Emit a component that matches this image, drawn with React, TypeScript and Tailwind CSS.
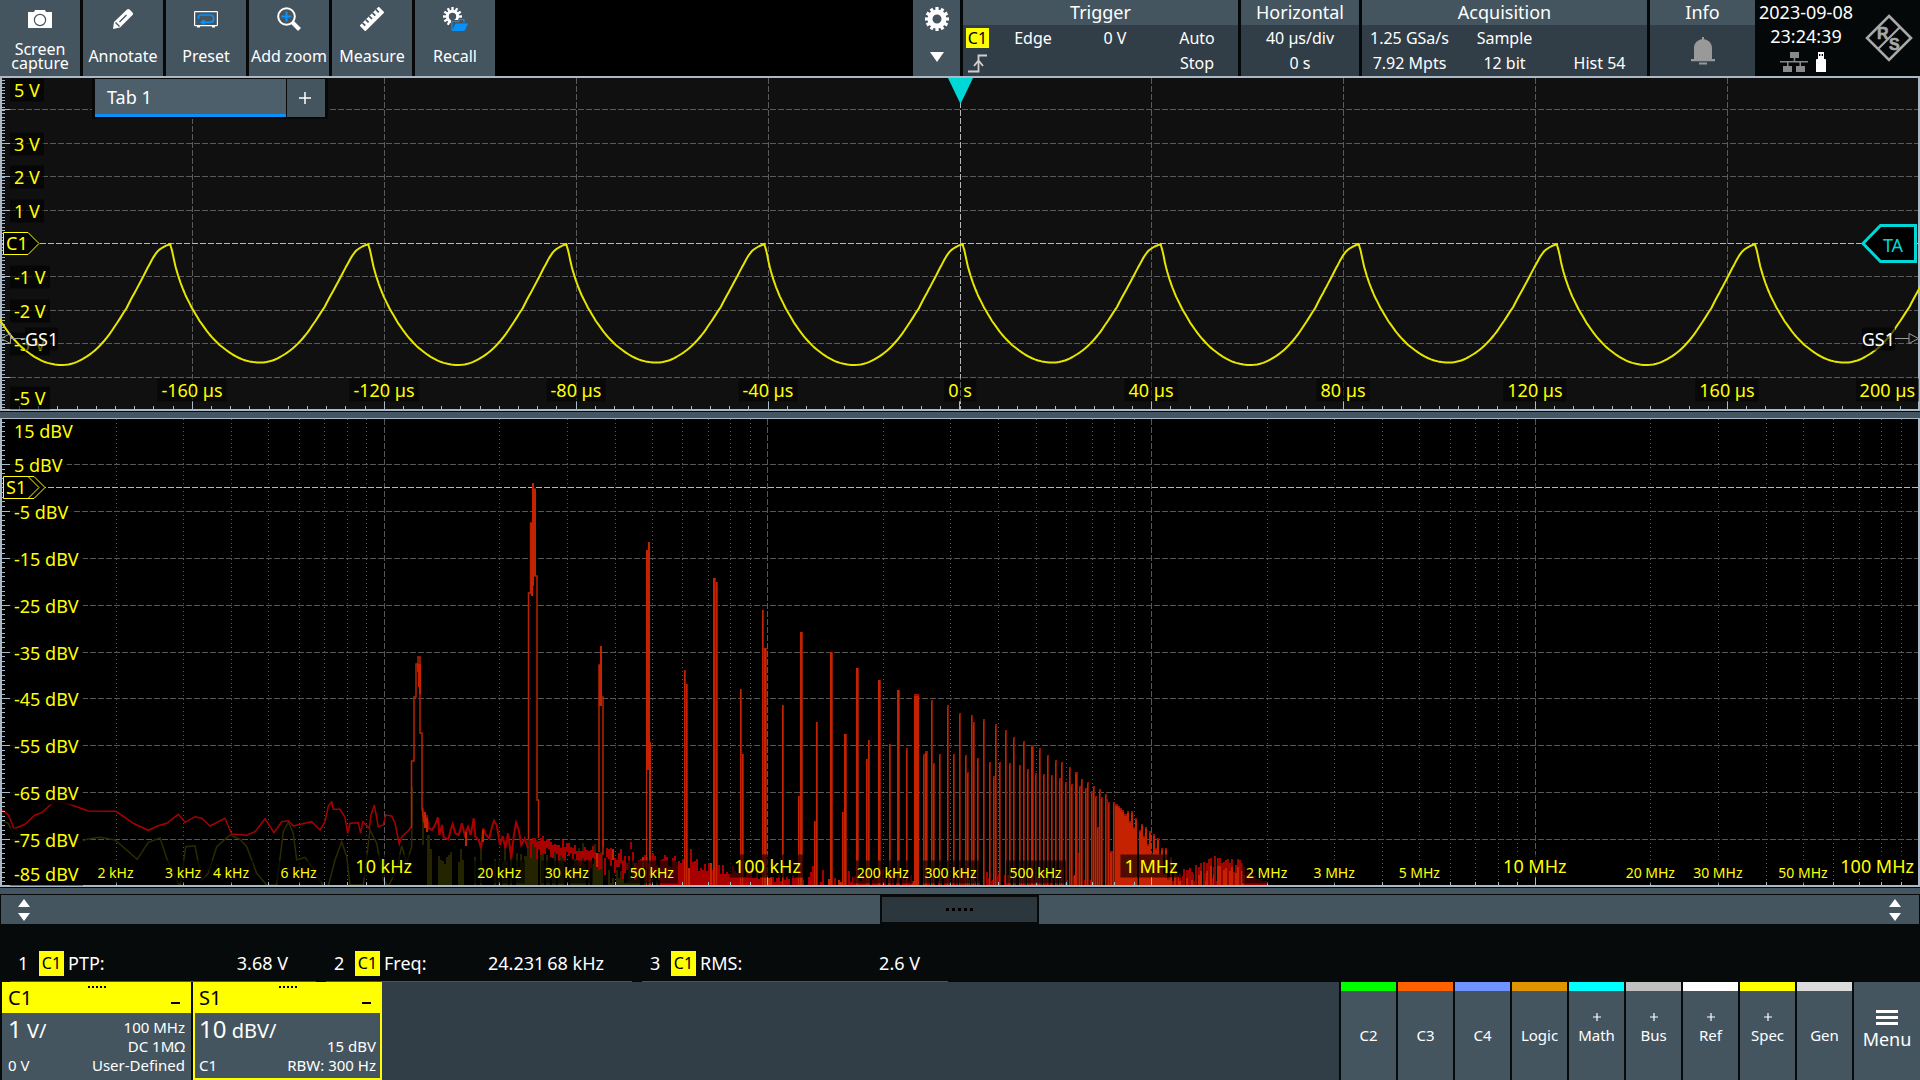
import React from "react";

/* ---------- shared helpers ---------- */

const VIEW_W = 1920;
const T_TOP = 76;
const T_H = 335;
const S_TOP = 418;
const S_H = 469;

const FRAME = "#a9b9c7";

function makeRandom(seed: number) {
  let s = seed;
  return () => {
    s = (s * 1664525 + 1013904223) % 4294967296;
    return s / 4294967296;
  };
}

function pct(value: number, start: number, size: number) {
  return `${((value - start) / size) * 100}%`;
}

/* ---------- time domain trace ---------- */

const CYCLE: [number, number][] = [
  [0, 244.5],
  [1, 246],
  [6, 267],
  [11, 283],
  [16, 295.5],
  [22, 307.5],
  [30, 321],
  [40, 334.5],
  [50, 345],
  [63, 354.5],
  [76, 360.5],
  [91, 362.5],
  [103, 360.5],
  [113, 355.5],
  [123, 348.5],
  [133, 338.5],
  [143, 325],
  [155, 307],
  [163, 292],
  [170, 279],
  [178, 264],
  [185, 252.5],
  [191, 247.5],
  [198.1, 244.5],
];

const PERIOD = 198.1;

/* Catmull-Rom sampling between neighbouring points of one cycle */
function smooth(list: [number, number][]) {
  const out: [number, number][] = [];
  for (let i = 0; i < list.length - 1; i++) {
    const p0 = list[Math.max(0, i - 1)];
    const p1 = list[i];
    const p2 = list[i + 1];
    const p3 = list[Math.min(list.length - 1, i + 2)];
    for (let s = 0; s < 4; s++) {
      const t = s / 4;
      const y =
        0.5 *
        (2 * p1[1] +
          (p2[1] - p0[1]) * t +
          (2 * p0[1] - 5 * p1[1] + 4 * p2[1] - p3[1]) * t * t +
          (3 * p1[1] - p0[1] - 3 * p2[1] + p3[1]) * t * t * t);
      out.push([p1[0] + (p2[0] - p1[0]) * t, y]);
    }
  }
  return out;
}

function buildWave() {
  const cycle = smooth(CYCLE);
  const pts: string[] = [];
  for (let k = -5; k <= 4; k++) {
    const start = 962.5 + PERIOD * k - 0.5;
    const depth = Math.abs(k) % 2 === 1 ? 1.021 : 1;
    cycle.forEach(([dx, y]) => {
      pts.push(`${(start + dx).toFixed(1)},${(244.5 + (y - 244.5) * depth).toFixed(1)}`);
    });
  }
  return pts.join(" ");
}

const WAVE = buildWave();

const V_LINES = [109, 143, 176, 210, 276, 310, 343, 377];

/* ---------- spectrum traces ---------- */

const RED_FLOOR: [number, number][] = [
  [0, 88], [10, 92], [25, 105], [35, 128], [42, 146], [75, 133], [105, 105], [125, 98], [165, 62], [205, 71],
  [265, 93], [348, 94], [400, 130], [445, 151], [475, 137], [500, 130], [535, 103], [555, 127], [585, 110],
  [605, 115], [630, 138], [675, 115], [695, 162], [740, 166], [765, 155], [795, 116], [822, 158], [845, 125],
  [865, 122], [880, 138], [935, 125], [960, 150], [975, 125], [985, 78], [995, 66], [1000, 88], [1020, 88],
  [1035, 112], [1043, 160], [1050, 130], [1075, 128], [1082, 160], [1088, 125], [1108, 145], [1113, 105],
  [1123, 75], [1135, 140], [1150, 135], [1157, 105], [1175, 108], [1185, 130], [1198, 192], [1205, 170],
  [1225, 152], [1234, 140],
];

const RED_MIDDLE: [number, number][] = [
  [1268, 85], [1272, 130], [1280, 105], [1286, 145], [1296, 150], [1305, 135], [1314, 112], [1318, 165],
  [1326, 135], [1331, 172], [1345, 178], [1352, 150], [1358, 132], [1366, 160], [1376, 165], [1386, 130],
  [1394, 165], [1404, 140], [1412, 165], [1421, 115], [1426, 170], [1436, 180], [1443, 205], [1450, 145],
  [1458, 165], [1468, 175], [1476, 140], [1482, 122], [1490, 135], [1500, 195], [1508, 168], [1516, 205],
  [1524, 160], [1534, 235], [1541, 170], [1548, 128], [1556, 150], [1564, 195], [1574, 175], [1584, 205],
];

const OLIVE_FLOOR: [number, number][] = [
  [0, 120], [25, 130], [40, 160], [100, 166], [160, 162], [200, 188], [240, 186], [260, 178], [300, 172],
  [345, 180], [412, 238], [445, 187], [480, 174], [500, 235], [520, 280], [540, 318], [557, 200], [585, 197],
  [605, 300], [625, 280], [650, 200], [690, 165], [720, 178], [740, 200], [770, 280], [800, 315], [830, 315],
  [850, 155], [865, 127], [880, 160], [890, 240], [915, 232], [935, 260], [970, 318], [985, 318], [1005, 240],
  [1025, 185], [1040, 230], [1050, 315], [1090, 315], [1110, 150], [1130, 190], [1150, 300], [1165, 318],
  [1190, 270], [1205, 197], [1220, 250], [1235, 200], [1237, 20],
];

const toPoints = (list: [number, number][]) =>
  list.map(([x, y]) => `${(x / 3).toFixed(1)},${(780 + y / 3).toFixed(1)}`).join(" ");

/* left edge, width, top */
const HARMONICS: [number, number, number][] = [
  [684, 2, 670], [686, 2, 684],
  [713, 3, 578], [716, 2, 582],
  [740, 2, 689], [742, 2, 754],
  [762, 2, 610], [764, 3, 648],
  [782, 2, 705],
  [798, 2, 796], [800, 3, 632],
  [814, 2, 821], [816, 2, 722],
  [830, 3, 652],
  [842, 2, 812], [844, 3, 734],
  [856, 3, 668],
  [866, 2, 759], [868, 2, 740],
  [878, 3, 680],
  [889, 2, 744],
  [897, 3, 690],
];

/* the upper harmonics, in thirds of a pixel from x = 900, y = 700 */
const DENSE: [number, number, number][] = [
  [19, 24, 145], [42, 57, -18], [68, 76, 163], [76, 83, 153], [93, 98, 0], [98, 105, 190], [117, 124, 163],
  [141, 147, 15], [159, 165, 162], [177, 183, 40], [195, 201, 165], [201, 207, 217], [213, 219, 46],
  [219, 225, 67], [231, 237, 175], [249, 255, 58], [267, 272, 185], [278, 285, 228], [285, 291, 72],
  [297, 303, 187], [315, 321, 91], [327, 333, 190], [339, 345, 112], [357, 363, 196], [369, 375, 124],
  [381, 388, 208], [393, 401, 136], [405, 411, 220], [417, 423, 145], [429, 435, 222], [441, 447, 166],
  [453, 459, 226], [465, 471, 181], [477, 483, 235], [483, 489, 187], [495, 501, 247], [507, 513, 202],
  [513, 519, 253], [525, 533, 217], [533, 537, 460], [537, 543, 257], [543, 549, 238], [555, 561, 265],
  [561, 567, 247], [573, 579, 272], [579, 585, 259], [585, 590, 287], [590, 598, 380], [598, 603, 268],
  [603, 609, 292], [615, 620, 283], [620, 625, 297], [625, 631, 307], [631, 639, 452], [639, 646, 305],
  [646, 655, 312], [655, 660, 318], [660, 666, 325], [666, 672, 331], [672, 680, 341], [680, 687, 334],
  [687, 693, 362], [693, 699, 333], [699, 704, 380], [704, 710, 355], [717, 722, 390], [722, 728, 371],
  [728, 734, 408], [734, 740, 382], [740, 747, 432], [747, 754, 394], [754, 759, 460], [759, 764, 402],
  [764, 771, 445], [771, 777, 415], [777, 783, 462], [783, 789, 445], [789, 795, 520], [795, 801, 445],
  [801, 809, 535], [809, 817, 470],
];

const HUMP: [number, number][] = [
  [822, 505], [829, 560], [836, 520], [843, 540], [850, 508], [857, 510], [863, 560], [868, 505], [874, 515],
  [881, 560], [886, 496], [893, 500], [901, 488], [908, 486], [914, 520], [919, 490], [925, 478], [931, 473],
  [938, 500], [943, 468], [950, 474], [957, 475], [963, 490], [969, 485], [976, 480], [982, 478], [988, 488],
  [994, 476], [1000, 515], [1006, 495], [1012, 478], [1018, 480], [1024, 490], [1030, 500], [1037, 515],
];

type Bar = { x: number; w: number; y: number; h: number; fill: string };

function buildFloor() {
  const rnd = makeRandom(77);
  const olive: Bar[] = [];
  const red: Bar[] = [];
  for (let x = 430; x < 700; x += 2) {
    const density = x < 500 ? 0.5 : x < 640 ? 0.8 : 0.4;
    if (rnd() < density) {
      const y = (x < 600 ? 842 : 858) + rnd() * 26;
      olive.push({ x, w: 2, y, h: 886 - y, fill: "#242400" });
    }
  }
  for (let x = 530; x < 1240; x += 2) {
    let base = 0;
    let spread = 0;
    if (x < 600) {
      base = 838 + (x - 530) * 0.2;
      spread = 9;
    } else if (x < 700) {
      base = 853 + (x - 600) * 0.12;
      spread = 14;
    } else if (x < 760) {
      base = 866 + (x - 700) * 0.15;
      spread = 10;
    } else {
      base = 878;
      spread = 8;
    }
    let y = base + (rnd() - 0.5) * spread;
    if (rnd() < 0.08) y -= 9;
    const reach = x < 660 ? 6 + rnd() * 12 : 60;
    const bottom = Math.min(886, y + reach);
    if (x > 780 && rnd() < 0.35) continue;
    red.push({ x, w: 2, y, h: Math.max(1, bottom - y), fill: rnd() < 0.14 ? "#c42400" : "#a80000" });
  }
  return { olive, red };
}

const FLOOR = buildFloor();

const KHZ = (f: number) => 384.2 + Math.log10(f / 10) * 383.7;

const MINOR_FREQS = [1, 10, 100, 1000, 10000].flatMap((d) => [2, 3, 4, 5, 6, 7, 8, 9].map((m) => m * d));
const MAJOR_FREQS = [10, 100, 1000, 10000];

const S_LINES = [464, 511, 558, 605, 652, 698, 745, 792, 839];

const FREQ_LABELS: { f: number; text: string; major?: boolean }[] = [
  { f: 2, text: "2 kHz" },
  { f: 3, text: "3 kHz" },
  { f: 4, text: "4 kHz" },
  { f: 6, text: "6 kHz" },
  { f: 10, text: "10 kHz", major: true },
  { f: 20, text: "20 kHz" },
  { f: 30, text: "30 kHz" },
  { f: 50, text: "50 kHz" },
  { f: 100, text: "100 kHz", major: true },
  { f: 200, text: "200 kHz" },
  { f: 300, text: "300 kHz" },
  { f: 500, text: "500 kHz" },
  { f: 1000, text: "1 MHz", major: true },
  { f: 2000, text: "2 MHz" },
  { f: 3000, text: "3 MHz" },
  { f: 5000, text: "5 MHz" },
  { f: 10000, text: "10 MHz", major: true },
  { f: 20000, text: "20 MHz" },
  { f: 30000, text: "30 MHz" },
  { f: 50000, text: "50 MHz" },
];

/* ---------- icons ---------- */

function Gear({ teeth = 12, r = 12, hole = 4, className = "" }: { teeth?: number; r?: number; hole?: number; className?: string }) {
  return (
    <svg viewBox="-12 -12 24 24" className={className} fill="none">
      <circle r={(r + hole) / 2 - 1} stroke="#fff" strokeWidth={r - hole - 3} />
      {Array.from({ length: teeth }, (_, i) => (
        <rect key={i} x={-1.6} y={-r} width={3.2} height={5} fill="#fff" transform={`rotate(${(360 / teeth) * i})`} />
      ))}
    </svg>
  );
}

const CameraIcon = () => (
  <svg viewBox="0 0 24 18" className="h-[18px] w-6">
    <path d="M0 2h6l1-2h10l1 2h6v16H0z" fill="#fff" />
    <circle cx="12" cy="10" r="5.6" fill="none" stroke="#445560" strokeWidth="1.2" />
  </svg>
);

const PencilIcon = () => (
  <svg viewBox="0 0 22 22" className="size-[22px]">
    <path d="M1 21l1-7L15 1.500c.8-.8 1.800-.8 2.600 0l2.900 2.900c.8.8.8 1.800 0 2.600L8 19.500z" fill="#fff" />
    <path d="M3.500 14.500l4 4M7.500 14l7-7" stroke="#445560" strokeWidth="1.300" fill="none" />
  </svg>
);

const PresetIcon = () => (
  <svg viewBox="0 0 24 18" className="h-[18px] w-6" fill="none">
    <rect x="0.6" y="1.600" width="22.800" height="14" rx="0.500" stroke="#fff" strokeWidth="1.200" />
    <path d="M3 16h3v1.500H3zM18 16h3v1.500h-3z" fill="#fff" />
    <path d="M4.500 9V7.500C4.500 6 5.500 5 7 5h9c2.200 0 3.700 1.500 3.700 3.700S18.200 12.300 16 12.300H9" stroke="#0a91f7" strokeWidth="1.700" />
    <path d="M6 12.300l4.500-3v6z" fill="#0a91f7" />
  </svg>
);

const AddZoomIcon = () => (
  <svg viewBox="0 0 24 24" className="size-6" fill="none">
    <circle cx="9.500" cy="9.500" r="8.300" stroke="#fff" strokeWidth="2" />
    <path d="M15.500 15.500l7 7" stroke="#fff" strokeWidth="4" />
    <path d="M9.500 4.500v10M4.500 9.500h10" stroke="#0a91f7" strokeWidth="2.200" />
  </svg>
);

const RulerIcon = () => (
  <svg viewBox="0 0 24 24" className="size-6">
    <g transform="rotate(-45 12 12)">
      <rect x="-1.500" y="8" width="27" height="8" fill="#fff" />
      <path d="M2.500 8v4M7.200 8v4M12 8v4M16.700 8v4M21.500 8v4" stroke="#445560" strokeWidth="1.700" />
    </g>
  </svg>
);

const RecallIcon = () => (
  <svg viewBox="0 0 26 26" className="size-[26px]" fill="none">
    <g transform="translate(10.500 10.500)">
      <circle r="5.200" stroke="#fff" strokeWidth="3" />
      {Array.from({ length: 12 }, (_, i) => (
        <rect key={i} x={-1.200} y={-9.500} width={2.400} height={4} fill="#fff" transform={`rotate(${30 * i})`} />
      ))}
    </g>
    <path d="M9 14h7l1-2h6v4h3l-3 9H9z" fill="#445560" />
    <path d="M10 24.500V15.500h6.500l1-2h4.500v3" stroke="#0a91f7" strokeWidth="1.200" />
    <path d="M10 25l3.500-7.500H26L22.500 25z" fill="#0a91f7" />
  </svg>
);

const BellIcon = () => (
  <svg viewBox="0 0 24 28" className="h-7 w-6" fill="#999">
    <path d="M11 0h2v2.200c4.500.5 8 4 8 8.800v11h3v2.200H0V22h3V11c0-4.800 3.500-8.300 8-8.800zM8 25.500h8v2H8z" />
  </svg>
);

const RisingEdgeIcon = () => (
  <svg viewBox="0 0 20 19" className="h-[19px] w-5" fill="none" stroke="#cfcfcf" strokeWidth="1.800">
    <path d="M0 17.500h10.500V1.500H19M6 12l4.500-5.500L15 12" />
  </svg>
);

const NetworkIcon = () => (
  <svg viewBox="0 0 28 20" className="h-5 w-7" fill="#8a8a8a">
    <path d="M10 0h9v6h-9zM3 14h9v6H3zM16 14h9v6h-9zM0 9h28v1.500H0zM13.700 6h1.500v3.500h-1.500zM7 10h1.500v4H7zM19.500 10H21v4h-1.500z" />
  </svg>
);

const UsbIcon = () => (
  <svg viewBox="0 0 10 20" className="h-5 w-2.5">
    <path d="M2 0h6v7h1.500l.5 1v12H0V8l.5-1H2z" fill="#fff" />
    <path d="M3 2h1.300v2H3zM5.700 2H7v2H5.700z" fill="#000" />
  </svg>
);

const Logo = () => (
  <svg viewBox="-24 -24 48 48" className="size-12" role="img" aria-label="R&S">
    <path d="M0-22L22 0 0 22-22 0z" fill="none" stroke="#a9a9a9" strokeWidth="2.600" />
    <path d="M-11 11L11-11" stroke="#a9a9a9" strokeWidth="2.200" />
    <text x="-12" y="1" fontSize="16" fontWeight="bold" fill="#a9a9a9" stroke="#a9a9a9" strokeWidth="0.600" className="font-['Liberation_Sans']">
      R
    </text>
    <text x="0" y="12" fontSize="16" fontWeight="bold" fill="#a9a9a9" stroke="#a9a9a9" strokeWidth="0.600" className="font-['Liberation_Sans']">
      S
    </text>
  </svg>
);

const UpDown = () => (
  <svg viewBox="0 0 12 22" className="h-[22px] w-3" fill="#fff">
    <path d="M6 0l6 8H0zM6 22l6-8H0z" />
  </svg>
);

/* ---------- header ---------- */

const TOOLS = [
  { label: "Screen capture", Icon: CameraIcon },
  { label: "Annotate", Icon: PencilIcon },
  { label: "Preset", Icon: PresetIcon },
  { label: "Add zoom", Icon: AddZoomIcon },
  { label: "Measure", Icon: RulerIcon },
  { label: "Recall", Icon: RecallIcon },
];

function InfoPanel({ title, className, children }: { title: string; className: string; children: React.ReactNode }) {
  return (
    <section className={`flex flex-col bg-[#323e47] ${className}`}>
      <h2 className="flex h-[25px] items-center justify-center bg-[#445560] text-lg leading-[25px]">{title}</h2>
      {children}
    </section>
  );
}

function Header() {
  return (
    <header className="flex h-[76px] justify-between bg-black">
      <nav className="flex gap-[3px] bg-[#080808]">
        {TOOLS.map(({ label, Icon }) => (
          <button key={label} type="button" className="flex w-20 flex-col items-center bg-[#445560]">
            <span className="flex h-[38px] items-center justify-center">
              <Icon />
            </span>
            <span
              className={`flex h-9 items-center justify-center text-base ${
                label === "Screen capture" ? "px-2 leading-[14px]" : "whitespace-nowrap"
              }`}
            >
              {label}
            </span>
          </button>
        ))}
      </nav>
      <div className="flex gap-[3px] bg-[#050808]">
        <button type="button" aria-label="Settings" className="flex w-[47px] flex-col items-center gap-[21px] bg-[#445560] pt-[7px]">
          <Gear className="size-6" />
          <svg viewBox="0 0 14 10" className="h-2.5 w-3.5" fill="#fff">
            <path d="M0 0h14L7 10z" />
          </svg>
        </button>
        <InfoPanel title="Trigger" className="w-[275px]">
          <div className="grid flex-1 grid-cols-[29px_1fr_1fr_1fr] grid-rows-2 place-items-center text-base leading-5">
            <span className="bg-[#ffff00] px-0.5 leading-5 text-black">C1</span>
            <span>Edge</span>
            <span>0 V</span>
            <span>Auto</span>
            <RisingEdgeIcon />
            <span />
            <span />
            <span>Stop</span>
          </div>
        </InfoPanel>
        <InfoPanel title="Horizontal" className="w-[118px]">
          <div className="grid flex-1 grid-rows-2 place-items-center text-base leading-5">
            <span>40 µs/div</span>
            <span>0 s</span>
          </div>
        </InfoPanel>
        <InfoPanel title="Acquisition" className="w-[285px]">
          <div className="grid flex-1 grid-cols-3 grid-rows-2 place-items-center text-base leading-5">
            <span>1.25 GSa/s</span>
            <span>Sample</span>
            <span />
            <span>7.92 Mpts</span>
            <span>12 bit</span>
            <span>Hist 54</span>
          </div>
        </InfoPanel>
        <div className="flex">
          <InfoPanel title="Info" className="w-[105px]">
            <div className="flex flex-1 items-center justify-center">
              <BellIcon />
            </div>
          </InfoPanel>
          <div className="flex w-[165px] items-center">
            <div className="flex h-full w-[102px] flex-col items-center text-lg leading-6">
              <span>2023-09-08</span>
              <span>23:24:39</span>
              <span className="flex gap-2 self-start pt-1 pl-[25px]">
                <NetworkIcon />
                <UsbIcon />
              </span>
            </div>
            <div className="flex flex-1 justify-center">
              <Logo />
            </div>
          </div>
        </div>
      </div>
    </header>
  );
}

/* ---------- plots ---------- */

const LABEL = "absolute -translate-y-1/2 whitespace-nowrap px-1 leading-[23px] text-[#ffff00]";

function TimePlot() {
  const yLabels: [string, number][] = [
    ["5 V", 90], ["3 V", 144], ["2 V", 177], ["1 V", 211], ["-1 V", 277], ["-2 V", 311], ["-3 V", 344], ["-5 V", 398],
  ];
  const xLabels: [string, number][] = [
    ["-160 µs", 192], ["-120 µs", 384], ["-80 µs", 576], ["-40 µs", 768], ["0 s", 960], ["40 µs", 1151],
    ["80 µs", 1343], ["120 µs", 1535], ["160 µs", 1727],
  ];
  return (
    <section className="relative min-h-0 shrink grow-[335] basis-0 bg-[#101010] text-lg" aria-label="Time diagram">
      <svg viewBox={`0 ${T_TOP} ${VIEW_W} ${T_H}`} preserveAspectRatio="none" className="absolute inset-0 size-full">
        <g shapeRendering="crispEdges" stroke="#5a5a5a" strokeDasharray="6 2">
          {V_LINES.map((y) => (
            <line key={y} x1="10" x2="1918" y1={y + 0.5} y2={y + 0.5} />
          ))}
          {[192, 384, 576, 768, 1151, 1343, 1535, 1727].map((x) => (
            <line key={x} x1={x + 0.5} x2={x + 0.5} y1="78" y2="400" />
          ))}
          <line x1="40" x2="1918" y1="243.500" y2="243.500" stroke="#b8b8b8" />
          <line x1="960.500" x2="960.500" y1="78" y2="409" stroke="#b8b8b8" />
        </g>
        <g shapeRendering="crispEdges" stroke={FRAME}>
          {Array.from({ length: 99 }, (_, i) => {
            const y = Math.round(76.500 + 3.340 * (i + 1)) + 0.5;
            return <line key={i} x1="2" x2="5" y1={y} y2={y} />;
          })}
          {[...V_LINES, 243].map((y) => (
            <line key={y} x1="2" x2="10" y1={y + 0.5} y2={y + 0.5} />
          ))}
          {Array.from({ length: 99 }, (_, i) => {
            const x = Math.floor(0.4 + 19.190 * (i + 1)) + 0.5;
            return <line key={i} x1={x} x2={x} y1={(i + 1) % 10 === 0 ? 401 : 406} y2="409" />;
          })}
        </g>
        <path d={`M0 ${T_TOP}H1920V411H0zM2 78V409H1918V78z`} fillRule="evenodd" fill={FRAME} />
      </svg>

      {yLabels.map(([text, y]) => (
        <span key={text} className={`${LABEL} left-2.5 bg-black/60`} style={{ top: pct(y, T_TOP, T_H) }}>
          {text}
        </span>
      ))}

      <svg viewBox={`0 ${T_TOP} ${VIEW_W} ${T_H}`} preserveAspectRatio="none" className="absolute inset-0 size-full">
        <polyline points={WAVE} fill="none" stroke="#e6e600" strokeWidth="2" strokeLinejoin="round" />
        <path d="M948 78h25l-12.500 26z" fill="#00d8d8" />
        <path d="M3.500 232.500h24.500L39 243.500 28 254.500H3.500z" fill="#000" stroke="#ffff00" />
        <g fill="none" stroke="#9a9a9a">
          <path d="M1 338.500l9.500-5v10zM11 338.500h15" />
          <path d="M1918.500 338.500l-9.500-5v10zM1909 338.500h-14" />
        </g>
        <path d="M1863 243.500L1880.500 225.500H1915.500V261.500H1880.500z" fill="#000" stroke="#00d8d8" strokeWidth="3" />
      </svg>

      {xLabels.map(([text, x]) => (
        <span
          key={text}
          className={`${LABEL} -translate-x-1/2 bg-black/50`}
          style={{ left: pct(x, 0, VIEW_W), top: pct(390, T_TOP, T_H) }}
        >
          {text}
        </span>
      ))}
      <span className={`${LABEL} right-px bg-black/50`} style={{ top: pct(390, T_TOP, T_H) }}>
        200 µs
      </span>
      <span className={`${LABEL} left-0.5`} style={{ top: pct(243, T_TOP, T_H) }}>
        C1
      </span>
      <span
        className="absolute -translate-x-1/2 -translate-y-1/2 text-lg text-[#00d8d8]"
        style={{ left: pct(1893, 0, VIEW_W), top: pct(245, T_TOP, T_H) }}
      >
        TA
      </span>
      <span
        className="absolute left-[25px] -translate-y-1/2 bg-black/60 leading-[23px] text-white"
        style={{ top: pct(339, T_TOP, T_H) }}
      >
        GS1
      </span>
      <span
        className="absolute right-[25px] -translate-y-1/2 bg-black/60 leading-[23px] text-white"
        style={{ top: pct(339, T_TOP, T_H) }}
      >
        GS1
      </span>

      <div className="absolute top-0.5 left-[92px] flex gap-px bg-[#080808] px-[3px] pt-px pb-0.5">
        <button type="button" className="h-[38px] w-[191px] border-b-[3px] border-[#0a91f7] bg-[#4d5f6b] px-3 text-left text-lg">
          Tab 1
        </button>
        <button type="button" aria-label="Add tab" className="flex h-[38px] w-[38px] items-center justify-center bg-[#445560] pr-0.5">
          <svg viewBox="0 0 12 12" className="size-3" stroke="#fff" strokeWidth="1.500">
            <path d="M6 0v12M0 6h12" />
          </svg>
        </button>
      </div>
    </section>
  );
}

function SpectrumTraces() {
  return (
    <g>
      <polyline points={toPoints(OLIVE_FLOOR)} fill="none" stroke="#2b2b00" strokeWidth="1.500" />
      <g shapeRendering="crispEdges">
        {FLOOR.olive.map((b, i) => (
          <rect key={i} x={b.x} y={b.y} width={b.w} height={b.h} fill={b.fill} />
        ))}
        <path d="M422 808h2v37h-2zM427 835h3v51h-3zM527 886V840h11V886zM600 886V852h3V886z" fill="#242400" />
        {FLOOR.red.map((b, i) => (
          <rect key={i} x={b.x} y={b.y} width={b.w} height={b.h} fill={b.fill} />
        ))}
        <path d="M530 838h7V600h-6z" fill="#000" />
      </g>
      <polyline points={toPoints(RED_FLOOR)} fill="none" stroke="#a80000" strokeWidth="1.500" />
      <polyline points={toPoints(RED_MIDDLE)} fill="none" stroke="#a80000" strokeWidth="2" />
      <g fill="none" stroke="#b82200" strokeWidth="1.500">
        <path d="M411.500 828V761H414V697H416V664H418V657H420V733H422V808L424 822" />
        <path d="M425 812V828M427 818V832M466 832V846M483 830V842" stroke="#c42400" strokeWidth="2" />
        <path d="M528.500 840V593H530.500V523H533V489H535V576H537V800H538.500V838" />
        <path d="M599 852V665H601V697H603V855" />
      </g>
      <g shapeRendering="crispEdges" fill="#c42200">
        <path d="M417 664h4v30h-2zM532 483h2v6h2v87h-2l-1 20h-2V523h1zM600 646h2v60h-3v-41h1z" />
        <path d="M646 550h2v-8h2v200h1V886h-2V770h-2V886h-1z" />
        {HARMONICS.map(([x, w, y], i) => (
          <g key={i}>
            <rect x={x} y={y} width={w} height={886 - y} />
            <rect x={x + w - 1} y={y} width={1} height={886 - y} fill="#8a1800" />
          </g>
        ))}
        {DENSE.map(([a, b, t], i) => {
          const x = 900 + a / 3;
          const w = (b - a) / 3;
          const y = 700 + t / 3;
          return (
            <g key={i}>
              <rect x={x} y={y} width={w} height={886 - y} />
              {a < 640 && b - a < 10 && <rect x={x + w - 1} y={y} width={1} height={886 - y} fill="#7c1600" />}
              <rect x={x} y={y} width={w} height={2} fill="#a01000" />
            </g>
          );
        })}
        {HUMP.map(([a, t], i) => {
          const x = 900 + a / 3;
          const y = 700 + t / 3;
          return (
            <g key={i}>
              <rect x={x} y={y} width={2} height={Math.max(0, 886 - y)} fill="#9c0600" />
              {i % 3 !== 1 && <rect x={x} y={y + 8} width={2} height={Math.max(0, 878 - y)} fill="#c42200" />}
            </g>
          );
        })}
        <path d="M1246 872h4v4h6v3h6v2h6v5h-24z" fill="#8a0000" />
      </g>
    </g>
  );
}

function SpectrumPlot() {
  const yLabels: [string, number][] = [
    ["15 dBV", 431], ["5 dBV", 465], ["-5 dBV", 512], ["-15 dBV", 559], ["-25 dBV", 606], ["-35 dBV", 653],
    ["-45 dBV", 699], ["-55 dBV", 746], ["-65 dBV", 793], ["-75 dBV", 840], ["-85 dBV", 874],
  ];
  return (
    <section className="relative min-h-0 shrink grow-[469] basis-0 bg-black text-lg" aria-label="Spectrum diagram">
      <svg viewBox={`0 ${S_TOP} ${VIEW_W} ${S_H}`} preserveAspectRatio="none" className="absolute inset-0 size-full">
        <g shapeRendering="crispEdges" stroke="#565656">
          {S_LINES.map((y) => (
            <line key={y} x1="10" x2="1918" y1={y + 0.5} y2={y + 0.5} strokeDasharray="6 2" />
          ))}
          {MAJOR_FREQS.map((f) => {
            const x = Math.floor(KHZ(f)) + 0.5;
            return <line key={f} x1={x} x2={x} y1="419" y2="885" strokeDasharray="6 2" />;
          })}
          {MINOR_FREQS.map((f) => {
            const x = Math.floor(KHZ(f)) + 0.5;
            return <line key={f} x1={x} x2={x} y1="419" y2="885" strokeDasharray="1 3" />;
          })}
          <line x1="40" x2="1918" y1="487.500" y2="487.500" stroke="#b8b8b8" strokeDasharray="6 2" />
        </g>
        <SpectrumTraces />
        <g shapeRendering="crispEdges" stroke={FRAME}>
          {Array.from({ length: 99 }, (_, i) => {
            const y = Math.round(417 + 4.690 * (i + 1)) + 0.5;
            return <line key={i} x1="2" x2="5" y1={y} y2={y} />;
          })}
          {S_LINES.map((y) => (
            <line key={y} x1="2" x2="10" y1={y + 0.5} y2={y + 0.5} />
          ))}
          {MINOR_FREQS.map((f) => {
            const x = Math.floor(KHZ(f)) + 0.5;
            return <line key={f} x1={x} x2={x} y1="882" y2="885" />;
          })}
          {MAJOR_FREQS.map((f) => {
            const x = Math.floor(KHZ(f)) + 0.5;
            return <line key={f} x1={x} x2={x} y1="877" y2="885" />;
          })}
        </g>
        <path d={`M0 ${S_TOP}H1920V887H0zM2 419V885H1918V419z`} fillRule="evenodd" fill={FRAME} />
      </svg>

      {yLabels.map(([text, y]) => (
        <span key={text} className={`${LABEL} left-2.5 bg-black/80`} style={{ top: pct(y, S_TOP, S_H) }}>
          {text}
        </span>
      ))}
      {FREQ_LABELS.map(({ f, text, major }) => (
        <span
          key={text}
          className={`${LABEL} -translate-x-1/2 bg-black/60 ${major ? "text-lg" : "text-sm leading-[22px]"}`}
          style={{ left: pct(KHZ(f) - 0.5, 0, VIEW_W), top: pct(major ? 866 : 872, S_TOP, S_H) }}
        >
          {text}
        </span>
      ))}
      <span className={`${LABEL} right-0.5 bg-black/60`} style={{ top: pct(866, S_TOP, S_H) }}>
        100 MHz
      </span>

      <svg viewBox="0 0 44 24" className="absolute left-0.5 h-6 w-11 -translate-y-1/2" style={{ top: pct(487, S_TOP, S_H) }}>
        <path d="M1.500 1.500H32L43 12.500 32 23.500H1.500z" fill="#000" stroke="#ffff00" />
        <path d="M26 1.500L37 12.500 26 23.500" fill="none" stroke="#ffff00" />
      </svg>
      <span className={`${LABEL} left-0.5`} style={{ top: pct(487, S_TOP, S_H) }}>
        S1
      </span>
    </section>
  );
}

/* ---------- results and bottom bar ---------- */

const MEASUREMENTS = [
  { n: 1, name: "PTP:", value: "3.68 V" },
  { n: 2, name: "Freq:", value: "24.231\u200968 kHz" },
  { n: 3, name: "RMS:", value: "2.6 V" },
];

function Dots({ className }: { className: string }) {
  return (
    <span className={`flex gap-[2px] ${className}`}>
      {[0, 1, 2, 3, 4].map((i) => (
        <i key={i} className="size-[2px] bg-black" />
      ))}
    </span>
  );
}

function Results() {
  return (
    <>
      <div className="mt-px h-1.5 bg-[#445560]" />
      <div className="ml-px mt-px flex h-[29px] items-stretch bg-[#445560]">
        <button type="button" aria-label="Expand left" className="flex flex-1 items-center pl-[17px]">
          <UpDown />
        </button>
        <button type="button" aria-label="Drag results" className="flex w-[159px] items-center justify-center gap-[3px] border-2 border-[#060a0b] bg-[#2c363d]">
          {[0, 1, 2, 3, 4].map((i) => (
            <i key={i} className="size-[3px] bg-black" />
          ))}
        </button>
        <button type="button" aria-label="Expand right" className="flex flex-1 items-center justify-end border-r border-[#060a0b] pr-[18px]">
          <UpDown />
        </button>
      </div>
      <div className="flex h-[58px] items-end gap-2.5 bg-[#060a0b] px-2.5 text-lg">
        {MEASUREMENTS.map(({ n, name, value }) => (
          <div key={n} className="flex h-9 w-[306px] items-center border-b border-[#445560] pr-7 pb-px pl-2">
            <span className="w-[21px]">{n}</span>
            <span className="w-[25px] bg-[#ffff00] text-center text-base leading-[25px] text-black">C1</span>
            <span className="flex-1 pl-1">{name}</span>
            <span>{value}</span>
          </div>
        ))}
      </div>
    </>
  );
}

function SignalCard({ name, big, unit, right, left, selected }: { name: string; big: string; unit: string; right: string[]; left: string; selected?: boolean }) {
  return (
    <button
      type="button"
      className={`flex w-[189px] flex-col border-x-2 border-b-2 bg-[#445560] text-left ${selected ? "border-[#ffff00]" : "border-[#445560]"}`}
    >
      <span className="relative -mx-0.5 flex h-[31px] items-center self-stretch bg-[#ffff00] px-1.5 text-xl leading-[31px] text-black">
        {name}
        <Dots className="absolute top-1 left-1/2 -translate-x-1/2" />
        <i className="absolute right-[11px] bottom-[9px] h-[2px] w-[9px] bg-black" />
      </span>
      <span className="flex flex-1 justify-between self-stretch px-1 pt-0.5 text-base leading-[19px]">
        <span className="flex flex-col justify-between">
          <span className="whitespace-nowrap text-xl leading-7">
            <span className="text-2xl leading-7">{big}</span> {unit}
          </span>
          <span className="pb-[3px] text-[15px]">{left}</span>
        </span>
        <span className="-ml-10 flex flex-col justify-end pb-[3px] text-right text-[15px]">
          {right.map((r) => (
            <span key={r}>{r}</span>
          ))}
        </span>
      </span>
    </button>
  );
}

const SOURCES = [
  { label: "C2", strip: "bg-[#00ff00]" },
  { label: "C3", strip: "bg-[#ff6000]" },
  { label: "C4", strip: "bg-[#7094ff]" },
  { label: "Logic", strip: "bg-[#e09400]" },
  { label: "Math", strip: "bg-[#00ffff]", add: true },
  { label: "Bus", strip: "bg-[#c0c0c0]", add: true },
  { label: "Ref", strip: "bg-white", add: true },
  { label: "Spec", strip: "bg-[#ffff00]", add: true },
  { label: "Gen", strip: "bg-[#dcdcdc]" },
];

function BottomBar() {
  return (
    <footer className="flex h-[98px] bg-[#323e47]">
      <div className="flex gap-[2px] bg-[#060a0b] pl-[2px]">
        <SignalCard name="C1" big="1" unit="V/" left="0 V" right={["100 MHz", "DC 1MΩ", "User-Defined"]} />
        <SignalCard name="S1" big="10" unit="dBV/" left="C1" right={["15 dBV", "RBW: 300 Hz"]} selected />
      </div>
      <div className="flex-1" />
      <div className="flex gap-[2px] bg-[#060a0b] pl-[2px]">
        {SOURCES.map(({ label, strip, add }) => (
          <button key={label} type="button" className="relative flex w-[55px] flex-col items-center bg-[#445560] text-[15px]">
            <span className={`h-[9px] self-stretch ${strip}`} />
            <span className="flex h-[34px] items-end justify-center pb-[3px]">
              {add && (
                <svg viewBox="0 0 10 10" className="size-2.5" stroke="#fff" strokeWidth="1.200">
                  <path d="M5 1v8M1 5h8" />
                </svg>
              )}
            </span>
            <span className="leading-5">{label}</span>
          </button>
        ))}
        <button type="button" className="flex w-[66px] flex-col items-center bg-[#445560] pt-7">
          <span className="flex flex-col gap-[3px]">
            <i className="h-[3px] w-[22px] bg-white" />
            <i className="h-[3px] w-[22px] bg-white" />
            <i className="h-[3px] w-[22px] bg-white" />
          </span>
          <span className="pt-0.5 text-lg leading-6">Menu</span>
        </button>
      </div>
    </footer>
  );
}

export default function App() {
  return (
    <div className="flex min-h-screen flex-col overflow-hidden bg-[#060a0b] font-['Noto_Sans','Open_Sans',sans-serif] text-white">
      <Header />
      <main className="flex flex-1 flex-col">
        <TimePlot />
        <div className="mt-px h-1.5 bg-[#445560]" />
        <SpectrumPlot />
      </main>
      <Results />
      <BottomBar />
    </div>
  );
}
